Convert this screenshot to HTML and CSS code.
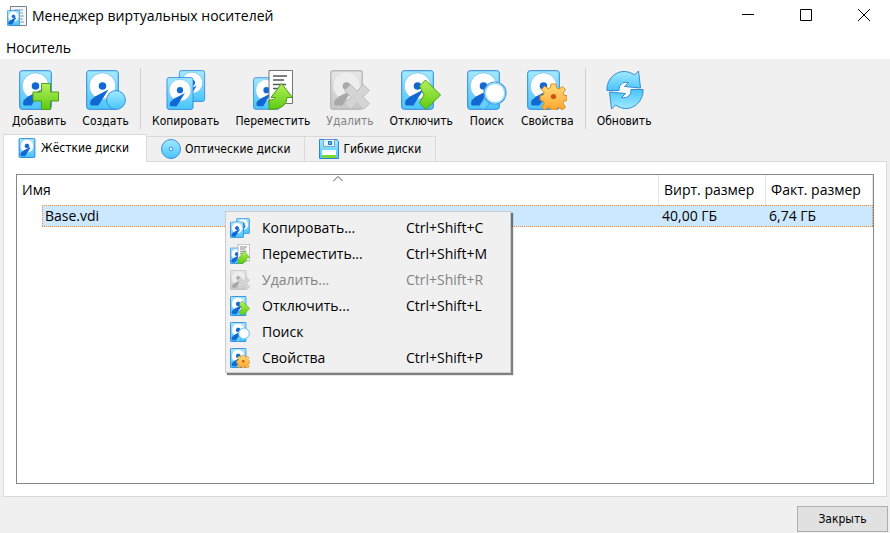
FILE: index.html
```html
<!DOCTYPE html>
<html lang="ru">
<head>
<meta charset="utf-8">
<title>Менеджер виртуальных носителей</title>
<link rel="stylesheet" href="styles.css">
</head>
<body>
<svg class="sprite" aria-hidden="true">
  <defs>
    <linearGradient id="g-body" x1="0" y1="0" x2="0" y2="1"><stop offset="0" stop-color="#a2eaff"/><stop offset="1" stop-color="#48c4fb"/></linearGradient>
    <linearGradient id="g-green" x1="0" y1="0" x2="0" y2="1"><stop offset="0" stop-color="#b4f05a"/><stop offset="1" stop-color="#5ccb10"/></linearGradient>
    <linearGradient id="g-orange" x1="0" y1="0" x2="0" y2="1"><stop offset="0" stop-color="#ffdc7a"/><stop offset="1" stop-color="#ffa32b"/></linearGradient>
    <linearGradient id="g-gray" x1="0" y1="0" x2="0" y2="1"><stop offset="0" stop-color="#e6e6e6"/><stop offset="1" stop-color="#c6c6c6"/></linearGradient>
  </defs>
  <symbol id="disk" viewBox="0 0 33 40">
    <rect class="disk-body" x=".7" y=".7" width="31.6" height="38.6" rx="2.5" fill="url(#g-body)" stroke="#2d84dc"/>
    <circle cx="16.5" cy="16" r="13.3" fill="#fff" stroke="#6fbcf0" stroke-width=".8"/>
    <circle class="disk-arm" cx="16.5" cy="16" r="3.8" fill="#1268d2"/>
    <path class="disk-arm" d="M22.500 19.500L9 26.500 4.500 30.500Q3.500 34 5 35.500H12.500L15.500 30.500z" fill="#1268d2"/>
  </symbol>
  <symbol id="add" viewBox="0 0 40 40">
    <use href="#disk" width="33" height="40"/>
    <path d="M22.500 13.500h9v8.500h8v9h-8v8.500h-9V31h-8.500v-9h8.500z" fill="url(#g-green)" stroke="#4d9c1a"/>
  </symbol>
  <symbol id="create" viewBox="0 0 40 40">
    <use href="#disk" width="33" height="40"/>
    <circle cx="30" cy="30" r="9.400" fill="url(#g-body)" stroke="#3c8fdc"/>
  </symbol>
  <symbol id="copy" viewBox="0 0 40 40">
    <use href="#disk" x="12" y="0" width="28" height="32"/>
    <use href="#disk" x="0" y="7" width="28" height="33"/>
  </symbol>
  <symbol id="move" viewBox="0 0 40 40">
    <use href="#disk" x="0" y="7" width="27" height="33"/>
    <path d="M16 .5h23.500v33H16z" fill="#fff" stroke="#747474"/>
    <path d="M20 6h14M20 10h11M20 14.500h13M20 18.500h8" stroke="#555" stroke-width="1.400"/>
    <path d="M28.500 13.500L39.500 27.500H34Q34 39.500 16 39.500V30q6 0 6-2.500h-4z" fill="url(#g-green)" stroke="#4d9c1a"/>
  </symbol>
  <symbol id="remove" viewBox="0 0 40 40">
    <rect x=".7" y=".7" width="31.600" height="38.600" rx="2.500" fill="url(#g-gray)" stroke="#bababa" stroke-width="1.400"/>
    <circle cx="16.500" cy="16" r="13.300" fill="#ededed"/>
    <circle cx="16.500" cy="16" r="3.800" fill="#a8a8a8"/>
    <path d="M22.500 19.500L9 26.500 4.500 30.500Q3.500 34 5 35.500H12.500L15.500 30.500z" fill="#a8a8a8"/>
    <path d="M20.500 14.500l6.500 6.500 6.500-6.500 6 6-6.500 6.500 6.500 6.500-6 6-6.500-6.500-6.500 6.500-6-6 6.500-6.500-6.500-6.500z" fill="#d4d4d4" stroke="#bcbcbc"/>
  </symbol>
  <symbol id="release" viewBox="0 0 40 40">
    <use href="#disk" width="33" height="40"/>
    <path d="M18.500 16l6-6L39.500 25 25 39.500l-6.500-6.500 4.500-8z" fill="url(#g-green)" stroke="#4d9c1a"/>
  </symbol>
  <symbol id="search" viewBox="0 0 40 40">
    <use href="#disk" width="33" height="40"/>
    <path d="M17.500 28.500l5 5-4.500 5.500q-4 1.500-6-2.500z" fill="#66cffb" stroke="#3b9be2" stroke-width=".8"/>
    <circle cx="28" cy="23" r="11" fill="#fff" stroke="#459bdc" stroke-width="1.200"/>
    <circle cx="28" cy="23" r="9.700" fill="none" stroke="#8bdcfb" stroke-width="1.200"/>
  </symbol>
  <symbol id="props" viewBox="0 0 40 40">
    <use href="#disk" width="33" height="40"/>
    <path d="M24 14h5l.7 4 2.300 1 3.500-2.500 3 3-2.500 3.500 1 2.300 3 .4v4.600l-3 .7-1 2.500 2.500 3.500-3 3-3.500-2.500-2.500 1-.6 3h-4.600l-.7-3-2.500-1-3.500 2.500-3-3 2.500-3.500-1-2.500-3-.7v-4.600l3-.6 1-2.500-2.500-3.500 3-3 3.500 2.500 2.200-1z" fill="url(#g-orange)" stroke="#d68a22"/>
    <circle cx="26.500" cy="26.500" r="2.600" fill="#cf5510"/>
  </symbol>
  <symbol id="refresh" viewBox="0 0 40 40">
    <circle cx="21" cy="20" r="8" fill="#fff" opacity=".9"/>
    <path id="refresh-arm" d="M3 20.500C2 7 17-4.500 30.500 5L34.500 1 36.500 18 20.500 16.500 24.500 12.500C18 11.500 15 15 15 20.500z" fill="url(#g-body)" stroke="#348bd2"/>
    <use href="#refresh-arm" transform="rotate(180 21 20)"/>
  </symbol>
  <symbol id="disc" viewBox="0 0 20 20">
    <circle cx="10" cy="10" r="9.500" fill="url(#g-body)" stroke="#3c8fdc"/>
    <circle cx="10" cy="10" r="1.800" fill="#fff" stroke="#3c8fdc"/>
  </symbol>
  <symbol id="floppy" viewBox="0 0 20 20">
    <path d="M.5.500h17.500L19.500 2.500v17H.5z" fill="url(#g-body)" stroke="#2d84dc"/>
    <path d="M4.500.500h11v7h-11z" fill="#e4f3fb" stroke="#5a8fb5" stroke-width=".7"/>
    <path d="M9.500 2.500h3v3h-3z" fill="#58bcef" stroke="#1d70bd"/>
    <path d="M3 11h14v8H3z" fill="#fff"/>
    <path d="M3 16h14v3H3z" fill="#79d935"/>
  </symbol>
  <symbol id="manager" viewBox="0 0 20 20">
    <path d="M3.500.500h16v19h-16z" fill="#f4f7fa" stroke="#74818d"/>
    <path d="M7 4h9M12 7h4M13 10h4M13 13h3M12 16h5" stroke="#8a98a5"/>
    <use href="#disk" x="0" y="4" width="13" height="16"/>
  </symbol>
</svg>

<header class="titlebar">
  <svg class="icon-small" aria-hidden="true"><use href="#manager"/></svg>
  <h1 class="title">Менеджер виртуальных носителей</h1>
  <div class="window-controls">
    <button class="window-button" type="button" aria-label="Свернуть"><svg class="glyph" viewBox="0 0 12 12"><path d="M0 5.500h12"/></svg></button>
    <button class="window-button" type="button" aria-label="Развернуть"><svg class="glyph" viewBox="0 0 12 12"><path d="M.5.500h11v11H.5z"/></svg></button>
    <button class="window-button" type="button" aria-label="Закрыть окно"><svg class="glyph" viewBox="0 0 12 12"><path d="M0 0l12 12M12 0L0 12"/></svg></button>
  </div>
</header>
<nav class="menubar"><button class="menubar-item" type="button">Носитель</button></nav>

<main class="content">
  <div class="toolbar" role="toolbar">
    <button class="tool" type="button"><svg class="icon-large" aria-hidden="true"><use href="#add"/></svg><span class="tool-label">Добавить</span></button>
    <button class="tool" type="button"><svg class="icon-large" aria-hidden="true"><use href="#create"/></svg><span class="tool-label">Создать</span></button>
    <span class="separator"></span>
    <button class="tool" type="button"><svg class="icon-large" aria-hidden="true"><use href="#copy"/></svg><span class="tool-label">Копировать</span></button>
    <button class="tool" type="button"><svg class="icon-large" aria-hidden="true"><use href="#move"/></svg><span class="tool-label">Переместить</span></button>
    <button class="tool" type="button" disabled><svg class="icon-large" aria-hidden="true"><use href="#remove"/></svg><span class="tool-label">Удалить</span></button>
    <button class="tool" type="button"><svg class="icon-large" aria-hidden="true"><use href="#release"/></svg><span class="tool-label">Отключить</span></button>
    <button class="tool" type="button"><svg class="icon-large" aria-hidden="true"><use href="#search"/></svg><span class="tool-label">Поиск</span></button>
    <button class="tool" type="button"><svg class="icon-large" aria-hidden="true"><use href="#props"/></svg><span class="tool-label">Свойства</span></button>
    <span class="separator"></span>
    <button class="tool" type="button"><svg class="icon-large" aria-hidden="true"><use href="#refresh"/></svg><span class="tool-label">Обновить</span></button>
  </div>

  <div class="tabs" role="tablist">
    <button class="tab tab-active" type="button" role="tab" aria-selected="true"><svg class="icon-small" aria-hidden="true"><use href="#disk"/></svg>Жёсткие диски</button>
    <button class="tab" type="button" role="tab" aria-selected="false"><svg class="icon-small" aria-hidden="true"><use href="#disc"/></svg>Оптические диски</button>
    <button class="tab" type="button" role="tab" aria-selected="false"><svg class="icon-small" aria-hidden="true"><use href="#floppy"/></svg>Гибкие диски</button>
  </div>
  <section class="pane" role="tabpanel">
    <div class="tree">
      <table class="media">
        <colgroup><col class="col-indent"><col><col class="col-size"><col class="col-size"></colgroup>
        <thead>
          <tr>
            <th colspan="2">Имя<svg class="sort" viewBox="0 0 10 6" aria-hidden="true"><path d="M.5 5L5 .5 9.500 5"/></svg></th>
            <th>Вирт. размер</th>
            <th>Факт. размер</th>
          </tr>
        </thead>
        <tbody>
          <tr><td class="indent"></td><td class="name">Base.vdi</td><td>40,00 ГБ</td><td class="last">6,74 ГБ</td></tr>
        </tbody>
      </table>
    </div>
  </section>
  <footer class="footer"><button class="close" type="button">Закрыть</button></footer>
</main>

<div class="context-menu" role="menu">
  <button class="menu-item" type="button" role="menuitem"><svg class="icon-small" aria-hidden="true"><use href="#copy"/></svg><span>Копировать...</span><span>Ctrl+Shift+C</span></button>
  <button class="menu-item" type="button" role="menuitem"><svg class="icon-small" aria-hidden="true"><use href="#move"/></svg><span>Переместить...</span><span>Ctrl+Shift+M</span></button>
  <button class="menu-item" type="button" role="menuitem" disabled><svg class="icon-small" aria-hidden="true"><use href="#remove"/></svg><span>Удалить...</span><span>Ctrl+Shift+R</span></button>
  <button class="menu-item" type="button" role="menuitem"><svg class="icon-small" aria-hidden="true"><use href="#release"/></svg><span>Отключить...</span><span>Ctrl+Shift+L</span></button>
  <button class="menu-item" type="button" role="menuitem"><svg class="icon-small" aria-hidden="true"><use href="#search"/></svg><span>Поиск</span></button>
  <button class="menu-item" type="button" role="menuitem"><svg class="icon-small" aria-hidden="true"><use href="#props"/></svg><span>Свойства</span><span>Ctrl+Shift+P</span></button>
</div>
</body>
</html>
```
FILE: styles.css
```css
* {
  box-sizing: border-box;
}

body {
  margin: 0;
  min-height: 100vh;
  display: flex;
  flex-direction: column;
  position: relative;
  background: #fff;
  color: #000;
  font: 14px/20px "Open Sans", "Noto Sans", sans-serif;
}

button {
  margin: 0;
  padding: 0;
  border: 0;
  background: none;
  color: inherit;
  font: inherit;
  white-space: nowrap;
}

svg {
  display: block;
  flex: none;
}

.sprite {
  position: absolute;
  width: 0;
  height: 0;
}

/* Disk details get heavier lines at the small icon size */
.icon-small {
  --disk-outline: 2px;
  --arm-outline: 2px;
  width: 20px;
  height: 20px;
}

.icon-large {
  --disk-outline: 1px;
  --arm-outline: 0;
  width: 40px;
  height: 40px;
}

.disk-body {
  stroke-width: var(--disk-outline);
}

.disk-arm {
  stroke: #1268d2;
  stroke-width: var(--arm-outline);
}

/* Title and menu bar */
.titlebar {
  display: flex;
  align-items: center;
  gap: 5px;
  height: 32px;
  padding-left: 7px;
}

.title {
  margin: 0;
  font-size: 14px;
  font-weight: 400;
}

.window-controls {
  display: flex;
  align-self: flex-start;
  gap: 6px;
  margin-left: auto;
}

.window-button {
  display: grid;
  place-items: center;
  width: 52px;
  height: 30px;
}

.glyph {
  width: 12px;
  height: 12px;
  fill: none;
  stroke: #000;
}

.menubar {
  display: flex;
  padding: 6px 6px 1px;
}

/* Toolbar */
.content {
  flex: 1;
  display: flex;
  flex-direction: column;
  background: #f0f0f0;
}

.toolbar {
  display: flex;
  gap: 2px;
  padding: 9px 5px 5px;
  font: 12px/16px "DejaVu Sans Condensed", "DejaVu Sans", sans-serif;
}

.tool {
  display: flex;
  flex-direction: column;
  align-items: center;
  gap: 3px;
  padding: 2px 5px 0;
}

.tool-label {
  padding: 0 2px;
}

.tool:disabled,
.menu-item:disabled {
  color: #838383;
}

.separator {
  width: 1px;
  margin: 0 2px;
  background: #d0d0d0;
}

/* Tabs */
.tabs {
  display: flex;
  align-items: flex-end;
  z-index: 1;
  padding-left: 3px;
  font: 12px/16px "DejaVu Sans Condensed", "DejaVu Sans", sans-serif;
}

.tab {
  display: flex;
  align-items: center;
  gap: 4px;
  height: 25px;
  padding: 0 14px;
  border: 1px solid #d9d9d9;
  border-width: 1px 1px 0 0;
}

.tab-active {
  height: 28px;
  margin-bottom: -1px;
  padding: 0 17px 2px 13px;
  border-left-width: 1px;
  background: #fff;
}

.pane {
  flex: 1;
  display: flex;
  margin: 0 3px;
  padding: 12px;
  border: 1px solid #d9d9d9;
  background: #fff;
}

.tree {
  flex: 1;
  border: 1px solid #828790;
}

.media {
  width: 100%;
  table-layout: fixed;
  border-spacing: 0;
}

.col-indent {
  width: 25px;
}

.col-size {
  width: 107px;
}

th {
  position: relative;
  height: 30px;
  padding: 0 5px;
  border-right: 1px solid #e5e5e5;
  font-weight: 400;
  text-align: left;
}

.sort {
  position: absolute;
  top: 1px;
  left: 50%;
  width: 10px;
  height: 6px;
  margin-left: -5px;
  fill: none;
  stroke: #555;
}

/* Selected row with a dotted focus frame */
td {
  --dots-x: repeating-linear-gradient(90deg, #ff8728 0 1px, #cce8ff 1px 2px);
  --dots-y: repeating-linear-gradient(#ff8728 0 1px, #cce8ff 1px 2px);
  height: 22px;
  padding: 1px 3px;
  background:
    var(--dots-x) top / 100% 1px no-repeat,
    var(--dots-x) bottom / 100% 1px no-repeat,
    #cce8ff;
}

td.name {
  background:
    var(--dots-x) top / 100% 1px no-repeat,
    var(--dots-x) bottom / 100% 1px no-repeat,
    var(--dots-y) left / 1px 100% no-repeat,
    #cce8ff;
}

td.last {
  background:
    var(--dots-x) top / 100% 1px no-repeat,
    var(--dots-x) bottom / 100% 1px no-repeat,
    var(--dots-y) right / 1px 100% no-repeat,
    #cce8ff;
}

td.indent {
  background: none;
}

.footer {
  display: flex;
  justify-content: flex-end;
  padding: 9px 2px 1px;
}

.close {
  width: 91px;
  height: 26px;
  border: 1px solid #adadad;
  background: #e1e1e1;
  font: 12px/16px "DejaVu Sans Condensed", "DejaVu Sans", sans-serif;
}

/* Context menu */
.context-menu {
  position: absolute;
  top: 211px;
  left: 225px;
  width: 286px;
  padding: 3px 2px 1px;
  border: 1px solid #ccc;
  background: #f0f0f0;
  box-shadow: 2px 2px 1px rgba(0, 0, 0, 0.5);
}

.menu-item {
  display: grid;
  grid-template-columns: 32px 144px 1fr;
  align-items: center;
  width: 100%;
  height: 26px;
  padding-left: 2px;
  text-align: left;
}
```
